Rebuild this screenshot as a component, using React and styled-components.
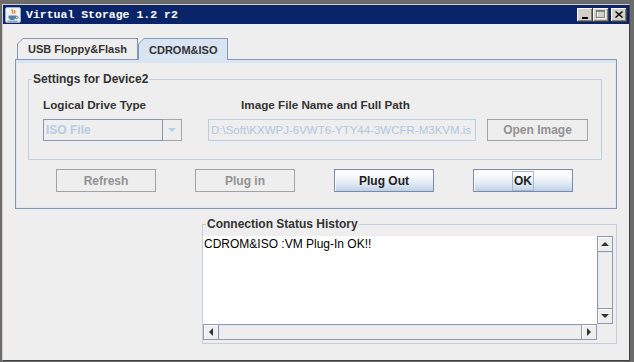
import React from 'react';
import styled, { createGlobalStyle, css } from 'styled-components';

const GlobalStyle = createGlobalStyle`
  html, body {
    margin: 0;
    padding: 0;
    background: #6b6b6b;
  }
  body {
    font-family: "Liberation Sans", Arial, sans-serif;
    font-size: 12px;
  }
  * {
    box-sizing: border-box;
  }
`;

const Window = styled.div`
  width: 634px;
  height: 362px;
  background: #6b6b6b;
  padding: 4px 4px 1px 2px;
  display: flex;
`;

const Frame = styled.div`
  flex: 1;
  display: flex;
  flex-direction: column;
  border-top: 1px solid #d4d0c8;
  border-left: 1px solid #d4d0c8;
  border-right: 1px solid #404040;
  border-bottom: 1px solid #404040;
  background: #eeeeee;
`;

const TitleBar = styled.div`
  height: 19px;
  background: #0a246a;
  display: flex;
  align-items: center;
  gap: 5px;
  padding: 0 2px 0 2px;
`;

const TitleText = styled.span`
  flex: 1;
  color: #ffffff;
  font-family: "Liberation Mono", "Courier New", monospace;
  font-weight: bold;
  font-size: 11.5px;
  white-space: nowrap;
`;

const Controls = styled.div`
  display: flex;
  align-items: center;
`;

const CtlButton = styled.div`
  width: 16px;
  height: 14px;
  margin-left: ${p => p.$gap || 0}px;
  background: #d4d0c8;
  box-shadow: inset -1px -1px #404040, inset 1px 1px #ffffff, inset -2px -2px #808080;
  display: flex;
  align-items: center;
  justify-content: center;
`;

const Content = styled.div`
  flex: 1;
  display: flex;
  flex-direction: column;
  padding: 14px 12px 0 12px;
`;

const TabStrip = styled.div`
  display: flex;
  align-items: flex-end;
  padding-left: 2px;
  position: relative;
  z-index: 1;
`;

const Tab = styled.div`
  height: ${p => (p.$selected ? 22 : 21)}px;
  margin-bottom: ${p => (p.$selected ? -1 : 0)}px;
  background: #8497b5;
  padding: 1px 1px 0 1px;
  clip-path: polygon(0 6px, 6px 0, 100% 0, 100% 100%, 0 100%);
`;

const TabFace = styled.div`
  height: 100%;
  padding: 0 10px 0 10px;
  display: flex;
  align-items: center;
  background: ${p => (p.$selected ? '#d9e4f2' : '#eeeeee')};
  clip-path: polygon(0 5px, 5px 0, 100% 0, 100% 100%, 0 100%);
  font-weight: bold;
  font-size: 11px;
  color: #333333;
  white-space: nowrap;
`;

const TabPanel = styled.div`
  border: 1px solid #8497b5;
  box-shadow: inset 0 3px 0 #d9e4f2, inset 0 0 0 1px #dfe7f2;
  padding: 12px 14px 16px 12px;
`;

const Group = styled.fieldset`
  margin: 0;
  padding: 0;
  min-width: 0;
  border: 1px solid #c3cfe0;
  width: ${p => p.$width || 'auto'};
  align-self: ${p => p.$align || 'stretch'};
  margin-top: ${p => p.$top || 0}px;
`;

const Legend = styled.legend`
  margin-left: 3px;
  padding: 0 1px;
  font-weight: bold;
  font-size: 12px;
  line-height: 14px;
  color: #333333;
`;

const SettingsBody = styled.div`
  display: flex;
  gap: 26px;
  padding: 12px 13px 18px 14px;
`;

const Column = styled.div`
  display: flex;
  flex-direction: column;
  gap: 7px;
  width: ${p => p.$width || 'auto'};
`;

const Label = styled.div`
  font-weight: bold;
  font-size: 11.7px;
  line-height: 14px;
  color: #333333;
  padding-left: ${p => p.$indent || 0}px;
  white-space: nowrap;
`;

const Combo = styled.div`
  display: flex;
  height: 22px;
`;

const ComboText = styled.div`
  flex: 1;
  border: 1px solid #8497b5;
  background: #eeeeee;
  color: #b8cce3;
  font-weight: bold;
  padding-left: 2px;
  display: flex;
  align-items: center;
`;

const ComboButton = styled.div`
  width: 19px;
  border: 1px solid #a5a5a5;
  border-left: none;
  background: #eeeeee;
  display: flex;
  align-items: center;
  justify-content: center;
`;

const FieldRow = styled.div`
  display: flex;
  gap: 11px;
`;

const PathField = styled.div`
  width: 268px;
  height: 22px;
  border: 1px solid #b8cce3;
  background: #eeeeee;
  color: #b3c7df;
  font-size: 11.5px;
  padding-left: 2px;
  white-space: nowrap;
  overflow: hidden;
  display: flex;
  align-items: center;
`;

const Button = styled.div`
  width: ${p => p.$width || 100}px;
  height: ${p => p.$height || 23}px;
  display: flex;
  align-items: center;
  justify-content: center;
  font-weight: bold;
  white-space: nowrap;
  ${p =>
    p.$disabled
      ? css`
          border: 1px solid #a3a3a3;
          background: #eeeeee;
          color: #929292;
        `
      : css`
          border: 1px solid #7a8aa8;
          background: linear-gradient(to bottom, #ffffff 0%, #f4f7fb 35%, #dce7f3 70%, #bdd0e7 100%);
          box-shadow: inset 1px 1px #ffffff;
          color: #222222;
        `}
`;

const Focus = styled.span`
  height: 20px;
  padding: 0 1px;
  border: 1px solid #a3b8cc;
  display: flex;
  align-items: center;
`;

const ButtonRow = styled.div`
  display: flex;
  gap: 39px;
  padding-left: 28px;
  margin-top: 9px;
`;

const StatusBody = styled.div`
  padding: 5px 3px 3px 0;
`;

const ScrollPane = styled.div`
  width: 410px;
  height: 104px;
  display: grid;
  grid-template-columns: 1fr 16px;
  grid-template-rows: 1fr 16px;
`;

const TextArea = styled.div`
  background: #ffffff;
  color: #000000;
  padding: 1px 1px;
  line-height: 15px;
  white-space: nowrap;
  overflow: hidden;
`;

const ScrollBar = styled.div`
  display: flex;
  flex-direction: ${p => (p.$vertical ? 'column' : 'row')};
  border: 1px solid #8a9ab4;
  background: #eeeeee;
`;

const ScrollButton = styled.div`
  flex: 0 0 15px;
  display: flex;
  align-items: center;
  justify-content: center;
  background: #eeeeee;
  box-shadow: inset 1px 1px #ffffff;
  ${p => p.$edge && `border-${p.$edge}: 1px solid #8a9ab4;`}
`;

const Track = styled.div`
  flex: 1;
  background: #eeeeee;
  box-shadow: inset 1px 1px #dfe7f2;
`;

const arrows = {
  up: c => css`
    border-left: 4px solid transparent;
    border-right: 4px solid transparent;
    border-bottom: 4px solid ${c};
  `,
  down: c => css`
    border-left: 4px solid transparent;
    border-right: 4px solid transparent;
    border-top: 4px solid ${c};
  `,
  left: c => css`
    border-top: 4px solid transparent;
    border-bottom: 4px solid transparent;
    border-right: 4px solid ${c};
  `,
  right: c => css`
    border-top: 4px solid transparent;
    border-bottom: 4px solid transparent;
    border-left: 4px solid ${c};
  `,
};

const Arrow = styled.span`
  width: 0;
  height: 0;
  ${p => arrows[p.$dir](p.$color || '#333333')}
`;

const JavaIcon = () => (
  <svg width="16" height="16" viewBox="0 0 16 16">
    <rect x="0.5" y="0.5" width="15" height="15" rx="1.5" fill="#eef2f8" stroke="#9aaecb" />
    <path d="M7.5 2.2c-2 1.8 1.8 2.8 0 4.8M9.8 3.2c-1.2 1.3 1 1.8 0 3.2" stroke="#e76f00" fill="none" strokeWidth="1.2" />
    <path d="M3.5 8.6h7.5v1.6c0 1.9-1.6 2.8-3.8 2.8s-3.7-.9-3.7-2.8z" fill="#5382a1" />
    <path d="M11 9.2h1a1.1 1.1 0 0 1 0 2.2h-1.2" stroke="#5382a1" fill="none" />
    <path d="M2.5 14.2h10" stroke="#5382a1" />
  </svg>
);

export default function App() {
  return (
    <>
      <GlobalStyle />
      <Window>
        <Frame>
          <TitleBar>
            <JavaIcon />
            <TitleText>Virtual Storage 1.2 r2</TitleText>
            <Controls>
              <CtlButton>
                <svg width="8" height="8" viewBox="0 0 8 8">
                  <rect x="1" y="6" width="6" height="2" fill="#000" />
                </svg>
              </CtlButton>
              <CtlButton>
                <svg width="10" height="9" viewBox="0 0 10 9">
                  <rect x="1.5" y="1.5" width="8" height="7" fill="none" stroke="#ffffff" />
                  <rect x="0.5" y="0.5" width="8" height="7" fill="none" stroke="#808080" />
                  <rect x="0" y="0" width="9" height="2" fill="#808080" />
                </svg>
              </CtlButton>
              <CtlButton $gap={2}>
                <svg width="8" height="7" viewBox="0 0 8 7">
                  <path d="M0.5 0.5l7 6M7.5 0.5l-7 6" stroke="#000" strokeWidth="1.4" />
                </svg>
              </CtlButton>
            </Controls>
          </TitleBar>

          <Content>
            <TabStrip>
              <Tab>
                <TabFace>USB Floppy&amp;Flash</TabFace>
              </Tab>
              <Tab $selected>
                <TabFace $selected>CDROM&amp;ISO</TabFace>
              </Tab>
            </TabStrip>

            <TabPanel>
              <Group>
                <Legend>Settings for Device2</Legend>
                <SettingsBody>
                  <Column $width="139px">
                    <Label>Logical Drive Type</Label>
                    <Combo>
                      <ComboText>ISO File</ComboText>
                      <ComboButton>
                        <Arrow $dir="down" $color="#b8cce3" />
                      </ComboButton>
                    </Combo>
                  </Column>
                  <Column>
                    <Label $indent={33}>Image File Name and Full Path</Label>
                    <FieldRow>
                      <PathField>D:\Soft\KXWPJ-6VWT6-YTY44-3WCFR-M3KVM.is</PathField>
                      <Button $disabled $width={101} $height={22}>Open Image</Button>
                    </FieldRow>
                  </Column>
                </SettingsBody>
              </Group>

              <ButtonRow>
                <Button $disabled>Refresh</Button>
                <Button $disabled>Plug in</Button>
                <Button>Plug Out</Button>
                <Button>
                  <Focus>OK</Focus>
                </Button>
              </ButtonRow>
            </TabPanel>

            <Group $width="415px" $align="flex-end" $top={8}>
              <Legend>Connection Status History</Legend>
              <StatusBody>
                <ScrollPane>
                  <TextArea>CDROM&amp;ISO :VM Plug-In OK!!</TextArea>
                  <ScrollBar $vertical>
                    <ScrollButton $edge="bottom">
                      <Arrow $dir="up" />
                    </ScrollButton>
                    <Track />
                    <ScrollButton $edge="top">
                      <Arrow $dir="down" />
                    </ScrollButton>
                  </ScrollBar>
                  <ScrollBar>
                    <ScrollButton $edge="right">
                      <Arrow $dir="left" />
                    </ScrollButton>
                    <Track />
                    <ScrollButton $edge="left">
                      <Arrow $dir="right" />
                    </ScrollButton>
                  </ScrollBar>
                </ScrollPane>
              </StatusBody>
            </Group>
          </Content>
        </Frame>
      </Window>
    </>
  );
}
